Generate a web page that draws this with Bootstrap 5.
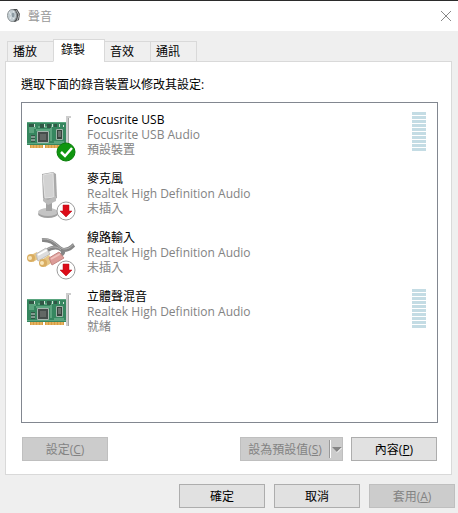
<!DOCTYPE html>
<html lang="zh-Hant">
<head>
<meta charset="utf-8">
<meta name="viewport" content="width=device-width, initial-scale=1">
<title>聲音</title>
<link href="https://cdn.jsdelivr.net/npm/bootstrap@5.3.0/dist/css/bootstrap.min.css" rel="stylesheet">
<style>
body{font:12px/15px "Open Sans","Noto Sans CJK TC",sans-serif;color:#000;background:#efefef}
.titlebar{height:31px;border-top:1px solid #2b2b2b;background:#fff;color:#999;padding:0 6px 0 7px}
.titlebar h1{font-size:12px;line-height:15px;font-weight:400;margin-left:7px}
.close-btn{width:12px;height:12px}
.sound-tabs{padding:8px 2px 0;margin-bottom:-1px;position:relative;border:0}
.sound-tabs .nav-link{height:21px;margin:0 0 0 -1px;padding:0 5px;min-width:47px;border:1px solid #d9d9d9;border-radius:0;background:#efefef;color:#000;text-align:left}
.sound-tabs .nav-item:first-child .nav-link{margin-left:0}
.sound-tabs .nav-link.active{height:23px;min-width:52px;padding:0 7px 2px;background:#fff;border-color:#d9d9d9;border-bottom-color:#fff}
.sheet{background:#fff;border:1px solid #d9d9d9;padding:15px 13px 13px 15px;margin:0 6px 0 5px}
.tab-area{margin:0 6px 0 5px}
.devices{border:1px solid #828790;border-radius:0;margin-top:10px}
.device{border:0;padding:9px 11px 0 4px;min-height:59px;background:#fff}
.device-icon{width:52px;height:50px;flex:none}
.device-text{margin-left:9px;color:#838383}
.device-text strong{display:block;font-weight:400;color:#000}
.meter{width:14px;display:grid;grid-auto-rows:3px;gap:1px;align-self:flex-start}
.meter i{background:#c4dce4}
.dlg-btn{width:86px;height:24px;padding:0;font-size:12px;line-height:15px;border:1px solid #adadad;border-radius:0;background:#e1e1e1;color:#000}
.dlg-btn:hover{background:#e5f1fb;border-color:#0078d7;color:#000}
.dlg-btn:disabled{background:#ccc;border-color:#bfbfbf;color:#838383;opacity:1}
.default-btn{width:89px}
.drop-btn{width:14px;border-left:0}
.drop-btn::before{content:"";width:1px;height:18px;background:#999;border-right:1px solid #fff;box-sizing:content-box}
.actions{margin-top:14px;padding:0 1px}
.footer-actions{padding:9px 3px 5px;gap:9px}
</style>
<script src="https://cdn.jsdelivr.net/npm/bootstrap@5.3.0/dist/js/bootstrap.bundle.min.js" defer></script>
</head>
<body class="min-vh-100 d-flex flex-column">
<svg class="d-none" aria-hidden="true">
 <symbol id="sound-card" viewBox="0 0 52 50">
  <path d="M40 4h5v2h-2v31h-3z" fill="#cdcdcd"/><path d="M42.500 6v31" stroke="#a5a5a5"/>
  <path d="M1 10h39v23H1z" fill="#36865f"/><path d="M1 10.500h39M1 31.500h39" stroke="#5aa57f"/>
  <path d="M4 33h13v3H4zM19 33h19v3H19z" fill="#d79b42"/><path d="M6 33v3M9 33v3M12 33v3M15 33v3M21 33v3M24 33v3M27 33v3M30 33v3M33 33v3M36 33v3" stroke="#f0c77b"/>
  <path d="M3 16h7M25 14v15M3 20h5M10 18h14M28 30h10M3 18h5M12 15h12" stroke="#82c29f"/>
  <path d="M11.500 19.500h11v11h-11z" fill="#454d4b" stroke="#a5b6ae"/><path d="M14 22h6v6h-6z" fill="#626865"/>
  <path d="M30.500 17.500h6v10h-6z" fill="#38443e" stroke="#9fb5a9"/><path d="M32 19h3v6h-3z" fill="#69706d"/>
  <path d="M3 12h5v3H3zM14 12h4v4h-4zM21 12h4v4h-4zM28 12h3v3h-3zM5 23h4v7H5z" fill="#315746"/>
  <path d="M8.500 12v3M18.500 12v3M26.500 12v3M33.500 12v3M37.500 13v2M5 25h4M5 28h4" stroke="#d3dfd8"/>
 </symbol>
 <symbol id="unplugged" viewBox="0 0 20 20">
  <circle cx="10" cy="10" r="9" fill="#fff" stroke="#9c9c9c"/><path d="M7 4h6v6h3l-6 6-6-6h3z" fill="#dc0b18" stroke="#b70d19" stroke-width=".5"/>
 </symbol>
</svg>
<header class="titlebar d-flex align-items-center">
 <svg width="14" height="16" viewBox="0 0 14 16" aria-hidden="true"><path d="M5 1l5 0 3 5-1 6-4 2-4-1z" fill="#4d5052"/><path d="M9 2l3 5-2 6" fill="none" stroke="#a9adaf"/><ellipse cx="5" cy="7.500" rx="4.500" ry="6" fill="#c4ced3" stroke="#8e9497"/><path d="M2 4l5 7M7 3L3 11" stroke="#e6edf0"/><ellipse cx="6" cy="7" rx="1.500" ry="2.500" fill="#8d9ba3"/></svg>
 <h1 class="mb-0 flex-grow-1">聲音</h1>
 <button class="close-btn btn p-0 border-0 d-flex" type="button" aria-label="關閉"><svg width="12" height="12" viewBox="0 0 12 12"><path d="M1 1l10 10M11 1L1 11" stroke="#888" fill="none"/></svg></button>
</header>
<main class="d-flex flex-column flex-grow-1">
 <div class="tab-area">
  <ul class="nav nav-tabs sound-tabs align-items-end flex-nowrap" role="tablist">
   <li class="nav-item" role="presentation"><button class="nav-link" type="button" role="tab" aria-selected="false">播放</button></li>
   <li class="nav-item" role="presentation"><button class="nav-link active" type="button" role="tab" aria-selected="true" aria-controls="recording">錄製</button></li>
   <li class="nav-item" role="presentation"><button class="nav-link" type="button" role="tab" aria-selected="false">音效</button></li>
   <li class="nav-item" role="presentation"><button class="nav-link" type="button" role="tab" aria-selected="false">通訊</button></li>
  </ul>
 </div>
 <section id="recording" class="sheet d-flex flex-column flex-grow-1" role="tabpanel">
  <p class="mb-0" id="prompt">選取下面的錄音裝置以修改其設定:</p>
  <ul class="devices list-group flex-grow-1" aria-labelledby="prompt">
   <li class="device list-group-item d-flex">
    <svg class="device-icon" viewBox="0 0 52 50" aria-hidden="true"><use href="#sound-card"/><circle cx="40" cy="40" r="9" fill="#0f960f" stroke="#087d08"/><path d="M35 40l4 4 7-8" fill="none" stroke="#fff" stroke-width="2.500"/></svg>
    <div class="device-text flex-grow-1"><strong>Focusrite USB</strong>Focusrite USB Audio<br>預設裝置</div>
    <div class="meter" aria-hidden="true"><i></i><i></i><i></i><i></i><i></i><i></i><i></i><i></i><i></i><i></i></div>
   </li>
   <li class="device list-group-item d-flex">
    <svg class="device-icon" viewBox="0 0 52 50" aria-hidden="true"><ellipse cx="22" cy="43" rx="10" ry="4" fill="#a0a0a0"/><ellipse cx="22" cy="41" rx="10" ry="4" fill="#c4c4c4"/><path d="M20 28l6 1v11h-6z" fill="#a2a2a2"/><path d="M16 3l11-2 3 2 1 24-9 4-5-4z" fill="#a9a9a9"/><path d="M17 4l10-2 1 24-9 1z" fill="#d2d2d2" stroke="#e2e2e2"/><path d="M17 27l5 2 8-4v5l-8 4-5-4z" fill="#bbb"/><use href="#unplugged" x="30" y="30" width="20" height="20"/></svg>
    <div class="device-text flex-grow-1"><strong>麥克風</strong>Realtek High Definition Audio<br>未插入</div>
   </li>
   <li class="device list-group-item d-flex">
    <svg class="device-icon" viewBox="0 0 52 50" aria-hidden="true"><path d="M16 10C29 9 32 20 38 20S45 17 48 15M20 21C27 16 33 17 36 20S35 25 33 26" fill="none" stroke="#858585" stroke-width="4"/><path d="M16 9C29 8 32 19 38 19S45 16 48 14M20 20C27 15 32 17 35 20" fill="none" stroke="#b2b2b2"/><path d="M5 25l6-3 3 6-7 4z" fill="#e6c585"/><circle cx="5" cy="28" r="4" fill="#d9ad61"/><circle cx="4" cy="28" r="2" fill="#f8e5ba"/><path d="M10 24l10-6 4 6-12 7z" fill="#ddd" stroke="#bdbdbd"/><path d="M12 25l9-5" stroke="#fff" stroke-width="2"/><path d="M17 29l6-4 4 7-8 5z" fill="#e6c585"/><circle cx="17" cy="33" r="4" fill="#d9ad61"/><circle cx="16" cy="33" r="2" fill="#f8e5ba"/><path d="M23 28l10-6 5 6-12 7z" fill="#dc9c98" stroke="#c48683"/><path d="M25 29l9-5" stroke="#efc1bd" stroke-width="2"/><use href="#unplugged" x="30" y="30" width="20" height="20"/></svg>
    <div class="device-text flex-grow-1"><strong>線路輸入</strong>Realtek High Definition Audio<br>未插入</div>
   </li>
   <li class="device list-group-item d-flex">
    <svg class="device-icon" viewBox="0 0 52 50" aria-hidden="true"><use href="#sound-card"/></svg>
    <div class="device-text flex-grow-1"><strong>立體聲混音</strong>Realtek High Definition Audio<br>就緒</div>
    <div class="meter" aria-hidden="true"><i></i><i></i><i></i><i></i><i></i><i></i><i></i><i></i><i></i><i></i></div>
   </li>
  </ul>
  <div class="actions d-flex align-items-center">
   <button class="dlg-btn btn me-auto" type="button" disabled>設定(<u>C</u>)</button>
   <div class="d-flex me-2"><button class="dlg-btn default-btn btn border-end-0" type="button" disabled>設為預設值(<u>S</u>)</button><button class="dlg-btn drop-btn btn d-flex align-items-center" type="button" aria-label="更多預設選項" disabled><svg width="11" height="7" viewBox="0 0 11 7"><path d="M1 1h10L6 6z" fill="#858585"/><path d="M6 6.500l5-5" stroke="#fff"/></svg></button></div>
   <button class="dlg-btn btn" type="button">內容(<u>P</u>)</button>
  </div>
 </section>
</main>
<footer class="footer-actions d-flex justify-content-end">
 <button class="dlg-btn btn" type="button">確定</button>
 <button class="dlg-btn btn" type="button">取消</button>
 <button class="dlg-btn btn" type="button" disabled>套用(<u>A</u>)</button>
</footer>
</body>
</html>
